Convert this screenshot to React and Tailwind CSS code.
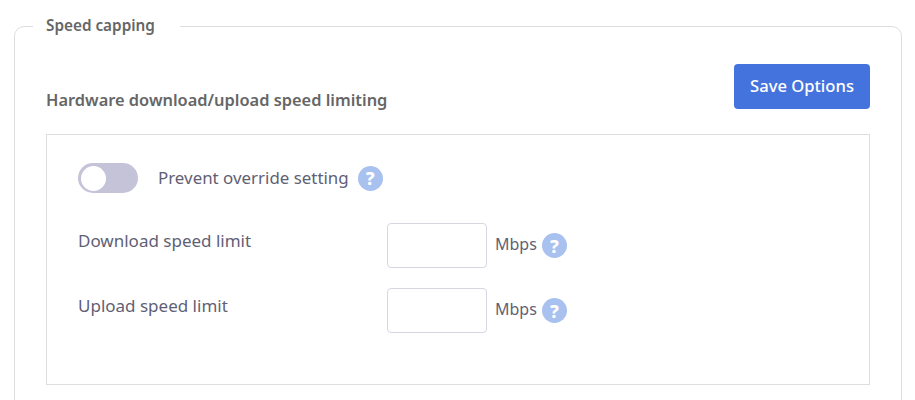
import React from "react";

function HelpIcon() {
  return (
    <span className="flex h-[25px] w-[25px] shrink-0 items-center justify-center rounded-full bg-[#a9c1ef] text-[18px] leading-none font-extrabold text-white">
      ?
    </span>
  );
}

function SpeedRow({ label }) {
  return (
    <div className="flex h-[45px] items-start">
      <label className="w-[309px] pt-[6px] text-[17px] leading-[24px]">{label}</label>
      <input
        type="text"
        className="h-[45px] w-[100px] rounded-[4px] border border-[#d8d6e3] bg-white"
      />
      <span className="ml-[8px] pt-[9px] text-[16px] leading-[24px]">Mbps</span>
      <span className="mt-[10px] ml-[5px]">
        <HelpIcon />
      </span>
    </div>
  );
}

export default function App() {
  return (
    <div className="h-[400px] w-[915px] overflow-hidden bg-white px-[14px] pt-[15px] font-['Noto_Sans','Open_Sans',sans-serif] text-[#5f5f75]">
      <fieldset className="h-[500px] w-[888px] rounded-[10px] border border-[#dedede] px-[31px] pt-[15px]">
        <legend className="ml-[-13px] pr-[25px] pb-[2px] pl-[13px] text-[15.3px] leading-[20px] font-semibold text-[#666666]">
          Speed capping
        </legend>
        <div className="flex items-start justify-between">
          <h3 className="pt-[37px] text-[16.4px] leading-[22px] font-semibold text-[#666666]">
            Hardware download/upload speed limiting
          </h3>
          <button className="mt-[12px] h-[45px] w-[136px] rounded-[4px] bg-[#4573dd] text-[16.6px] font-medium text-white">
            Save Options
          </button>
        </div>
        <div className="mt-[23px] flex h-[251px] flex-col border border-[#dedede] pt-[28px] pl-[31px]">
          <div className="flex h-[30px] items-center">
            <span className="flex h-[30px] w-[60px] items-center rounded-full bg-[#c5c3d8] pl-[3px]">
              <span className="h-[25px] w-[25px] rounded-full bg-white" />
            </span>
            <span className="ml-[20px] text-[16.9px] leading-[24px]">Prevent override setting</span>
            <span className="ml-[9px]">
              <HelpIcon />
            </span>
          </div>
          <div className="mt-[30px] flex flex-col gap-[20px]">
            <SpeedRow label="Download speed limit" />
            <SpeedRow label="Upload speed limit" />
          </div>
        </div>
      </fieldset>
    </div>
  );
}
